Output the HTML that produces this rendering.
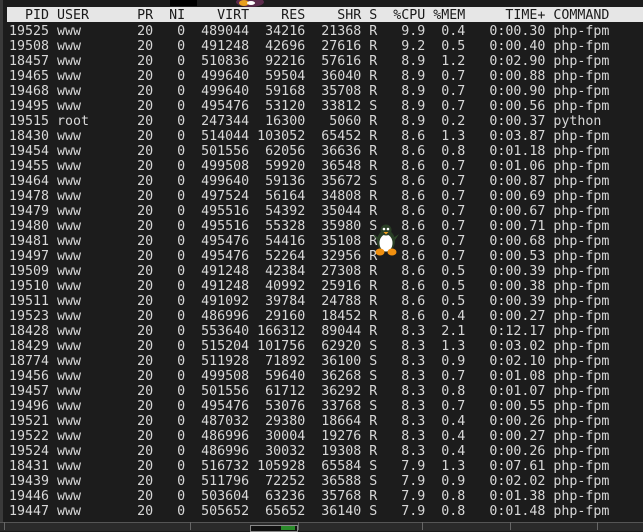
<!DOCTYPE html>
<html><head><meta charset="utf-8"><style>
html,body{margin:0;padding:0;}
body{width:643px;height:530px;background:#1c1c1c;position:relative;overflow:hidden;}
pre{margin:0;position:absolute;left:9px;font-family:"DejaVu Sans Mono","Liberation Mono",monospace;font-size:13.3px;line-height:15px;color:#d8d8d8;white-space:pre;}
#hdr{position:absolute;left:7px;right:0;top:7px;height:15px;background:#e6e6e6;}
#hdr pre{left:2px;top:1px;color:#1a1a1a;}
#rows{top:24px;}
#lb{position:absolute;left:0;top:0;width:3px;height:530px;background:#3a3a3a;}
#tb{position:absolute;left:0;top:522px;width:643px;height:8px;background:#2a2a2a;border-top:1px solid #555;}
.d{position:absolute;top:522px;width:1px;height:8px;background:#666;}
</style></head><body>
<div id="lb"></div>
<div style="position:absolute;left:170px;top:0;width:27px;height:6px;background:#000"></div>
<svg style="position:absolute;left:234px;top:0" width="32" height="7"><ellipse cx="16" cy="2" rx="14" ry="5" fill="#5a2a4a"/><ellipse cx="10" cy="3" rx="5" ry="3" fill="#e8a020"/><ellipse cx="17" cy="3" rx="4" ry="2" fill="#fff"/></svg>
<div id="hdr"><pre>  PID USER      PR  NI    VIRT    RES    SHR S  %CPU %MEM     TIME+ COMMAND</pre></div>
<pre id="rows">19525 www       20   0  489044  34216  21368 R   9.9  0.4   0:00.30 php-fpm
19508 www       20   0  491248  42696  27616 R   9.2  0.5   0:00.40 php-fpm
18457 www       20   0  510836  92216  57616 R   8.9  1.2   0:02.90 php-fpm
19465 www       20   0  499640  59504  36040 R   8.9  0.7   0:00.88 php-fpm
19468 www       20   0  499640  59168  35708 R   8.9  0.7   0:00.90 php-fpm
19495 www       20   0  495476  53120  33812 S   8.9  0.7   0:00.56 php-fpm
19515 root      20   0  247344  16300   5060 R   8.9  0.2   0:00.37 python
18430 www       20   0  514044 103052  65452 R   8.6  1.3   0:03.87 php-fpm
19454 www       20   0  501556  62056  36636 R   8.6  0.8   0:01.18 php-fpm
19455 www       20   0  499508  59920  36548 R   8.6  0.7   0:01.06 php-fpm
19464 www       20   0  499640  59136  35672 S   8.6  0.7   0:00.87 php-fpm
19478 www       20   0  497524  56164  34808 R   8.6  0.7   0:00.69 php-fpm
19479 www       20   0  495516  54392  35044 R   8.6  0.7   0:00.67 php-fpm
19480 www       20   0  495516  55328  35980 S   8.6  0.7   0:00.71 php-fpm
19481 www       20   0  495476  54416  35108 R   8.6  0.7   0:00.68 php-fpm
19497 www       20   0  495476  52264  32956 R   8.6  0.7   0:00.53 php-fpm
19509 www       20   0  491248  42384  27308 R   8.6  0.5   0:00.39 php-fpm
19510 www       20   0  491248  40992  25916 R   8.6  0.5   0:00.38 php-fpm
19511 www       20   0  491092  39784  24788 R   8.6  0.5   0:00.39 php-fpm
19523 www       20   0  486996  29160  18452 R   8.6  0.4   0:00.27 php-fpm
18428 www       20   0  553640 166312  89044 R   8.3  2.1   0:12.17 php-fpm
18429 www       20   0  515204 101756  62920 S   8.3  1.3   0:03.02 php-fpm
18774 www       20   0  511928  71892  36100 S   8.3  0.9   0:02.10 php-fpm
19456 www       20   0  499508  59640  36268 S   8.3  0.7   0:01.08 php-fpm
19457 www       20   0  501556  61712  36292 R   8.3  0.8   0:01.07 php-fpm
19496 www       20   0  495476  53076  33768 S   8.3  0.7   0:00.55 php-fpm
19521 www       20   0  487032  29380  18664 R   8.3  0.4   0:00.26 php-fpm
19522 www       20   0  486996  30004  19276 R   8.3  0.4   0:00.27 php-fpm
19524 www       20   0  486996  30032  19308 R   8.3  0.4   0:00.26 php-fpm
18431 www       20   0  516732 105928  65584 S   7.9  1.3   0:07.61 php-fpm
19439 www       20   0  511796  72252  36588 S   7.9  0.9   0:02.02 php-fpm
19446 www       20   0  503604  63236  35768 R   7.9  0.8   0:01.38 php-fpm
19447 www       20   0  505652  65652  36140 S   7.9  0.8   0:01.48 php-fpm</pre>
<svg style="position:absolute;left:370px;top:222px" width="32" height="34" viewBox="0 0 32 34">
<path d="M3 12 L10 17 L9 21 Z" fill="#2e4a2a"/><path d="M29 12 L22 17 L23 21 Z" fill="#2e4a2a"/>
<ellipse cx="16" cy="19" rx="9" ry="11" fill="#2a3f26"/>
<ellipse cx="16" cy="21" rx="6.5" ry="8.5" fill="#fff"/>
<circle cx="16" cy="8" r="5.5" fill="#2a3f26"/>
<circle cx="14" cy="7" r="1.3" fill="#fff"/><circle cx="18" cy="7" r="1.3" fill="#fff"/>
<path d="M13.5 10 L18.5 10 L16 12.5 Z" fill="#f0a020"/>
<ellipse cx="10" cy="30" rx="4.5" ry="3.5" fill="#f09010"/><ellipse cx="22" cy="30" rx="4.5" ry="3.5" fill="#f09010"/>
</svg>
<div id="tb"></div>
<div class="d" style="left:4px"></div><div class="d" style="left:190px"></div><div class="d" style="left:298px"></div><div class="d" style="left:422px"></div><div class="d" style="left:510px"></div><div class="d" style="left:597px"></div>
<div style="position:absolute;left:250px;top:525px;width:46px;height:5px;background:#111;border:1px solid #888"></div>
<div style="position:absolute;left:281px;top:526px;width:14px;height:4px;background:#2a8a2a"></div>
</body></html>
